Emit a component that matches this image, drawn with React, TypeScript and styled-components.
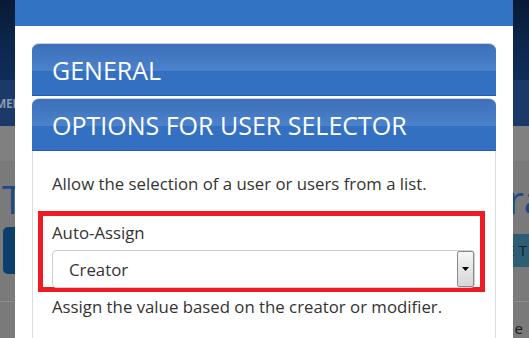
import React from "react";
import styled, { createGlobalStyle } from "styled-components";

const GlobalStyle = createGlobalStyle`
	html, body {
		margin: 0;
		padding: 0;
		width: 529px;
		height: 338px;
		overflow: hidden;
	}
	body {
		font-family: "Open Sans", "Liberation Sans", sans-serif;
	}
`;

const Page = styled.div`
	position: relative;
	width: 529px;
	height: 338px;
	overflow: hidden;
	background: #7f7f7f;
	display: flex;
	flex-direction: column;
`;

const TopBar = styled.div`
	height: 83px;
	background: linear-gradient(to bottom, #081a36 0%, #0d2850 60%, #0f2d5a 100%);
`;

const NavBand = styled.div`
	height: 47px;
	background: #1c3a69;
	display: flex;
	align-items: center;
	justify-content: space-between;
	.nav-item {
		font-family: "Open Sans", sans-serif;
		font-size: 12px;
		font-weight: 700;
		color: #8a99b0;
		margin-left: -5px;
		letter-spacing: -0.3px;
	}
`;

const Content = styled.div`
	flex: 1;
	display: flex;
	flex-direction: column;
	.strip {
		height: 35px;
		background: #808080;
	}
	.rest {
		flex: 1;
		background: #7a7a7a;
		display: flex;
		flex-direction: column;
	}
`;

const BgTitle = styled.div`
	display: flex;
	justify-content: space-between;
	font-family: "Open Sans", sans-serif;
	font-size: 38px;
	line-height: 40px;
	color: #1c4a86;
	padding: 0 0 0 2px;
	margin-top: 18px;
	.right {
		margin-right: -16px;
	}
`;

const BgButtons = styled.div`
	display: flex;
	justify-content: space-between;
	align-items: center;
	margin-top: 8px;
	height: 47px;
	.left {
		margin-left: 3px;
		width: 40px;
		height: 47px;
		border-radius: 5px;
		background: #0e3e6c;
	}
	.right {
		height: 33px;
		width: 40px;
		background: #2d5e73;
		font-family: "Open Sans", sans-serif;
		font-size: 15px;
		line-height: 33px;
		color: #10222c;
		box-sizing: border-box;
		text-align: right;
		padding-right: 2px;
	}
`;

const BgLine = styled.div`
	margin-top: 27px;
	height: 1px;
	background: #8d8d8d;
`;

const BgTail = styled.div`
	text-align: right;
	font-family: "Open Sans", sans-serif;
	font-size: 15px;
	line-height: 20px;
	color: #1a1a1a;
	margin-top: 16px;
	padding-right: 6px;
`;

const Modal = styled.div`
	position: absolute;
	left: 15px;
	top: 0;
	width: 498px;
	height: 338px;
	background: #fff;
	display: flex;
	flex-direction: column;
`;

const ModalHeader = styled.div`
	height: 26px;
	background: #3373c4;
	flex-shrink: 0;
`;

const ModalBody = styled.div`
	flex: 1;
	padding: 17px 17px 0 17px;
	display: flex;
	flex-direction: column;
	gap: 2px;
`;

const Panel = styled.div<{ $open?: boolean }>`
	display: flex;
	flex-direction: column;
	flex: ${(p) => (p.$open ? 1 : "none")};
`;

const PanelHeading = styled.div`
	height: 53px;
	box-sizing: border-box;
	border-radius: 7px 7px 0 0;
	border-top: 1px solid #c9d6e8;
	border-bottom: 1px solid #2a5ea6;
	background: linear-gradient(
		to bottom,
		#3d70b9 0%,
		#4a82cb 52%,
		#3370c2 52%,
		#3370c2 100%
	);
	display: flex;
	align-items: center;
	padding-left: 20px;
	padding-top: 1px;
	font-family: "Open Sans", sans-serif;
	font-size: 25px;
	color: #fff;
`;

const PanelContent = styled.div`
	flex: 1;
	border-left: 1px solid #dcdcdc;
	border-right: 1px solid #dcdcdc;
	padding: 21px 6px 0 5px;
	display: flex;
	flex-direction: column;
	color: #333;
	font-size: 16.8px;
	font-family: "Open Sans", sans-serif;
`;

const Help = styled.div<{ $gap?: number }>`
	padding-left: 14px;
	line-height: 23px;
	margin-top: ${(p) => p.$gap || 0}px;
	white-space: nowrap;
`;

const Highlight = styled.div`
	margin-top: 16px;
	border: 5px solid #ed1c24;
	padding: 5px 5px 0 9px;
	display: flex;
	flex-direction: column;
	width: 447px;
	box-sizing: border-box;
`;

const Label = styled.div`
	line-height: 23px;
	margin-bottom: 6px;
`;

const Select = styled.div`
	height: 38px;
	margin-bottom: -1px;
	box-sizing: border-box;
	border: 1px solid #cfcfcf;
	border-radius: 4px;
	display: flex;
	align-items: stretch;
	.value {
		flex: 1;
		display: flex;
		align-items: center;
		padding-left: 16px;
		color: #333;
	}
`;

const DropButton = styled.div`
	width: 17px;
	box-sizing: border-box;
	border: 1px solid #8a8a8a;
	border-radius: 2px;
	background: linear-gradient(to bottom, #f6f6f6 0%, #e6e6e6 50%, #d6d6d6 100%);
	display: flex;
	align-items: center;
	justify-content: center;
`;

export default function App() {
	return (
		<>
			<GlobalStyle />
			<Page>
				<TopBar />
				<NavBand>
					<span className="nav-item">MENU</span>
				</NavBand>
				<Content>
					<div className="strip" />
					<div className="rest">
						<BgTitle>
							<span>T</span>
							<span className="right">ra</span>
						</BgTitle>
						<BgButtons>
							<div className="left" />
							<div className="right">E T</div>
						</BgButtons>
						<BgLine />
						<BgTail>e</BgTail>
					</div>
				</Content>
				<Modal>
					<ModalHeader />
					<ModalBody>
						<Panel>
							<PanelHeading>GENERAL</PanelHeading>
						</Panel>
						<Panel $open>
							<PanelHeading>OPTIONS FOR USER SELECTOR</PanelHeading>
							<PanelContent>
								<Help>Allow the selection of a user or users from a list.</Help>
								<Highlight>
									<Label>Auto-Assign</Label>
									<Select>
										<div className="value">Creator</div>
										<DropButton>
											<svg width="7" height="4" viewBox="0 0 7 4">
												<path d="M0 0 L7 0 L3.5 4 Z" fill="#000" />
											</svg>
										</DropButton>
									</Select>
								</Highlight>
								<Help $gap={3}>Assign the value based on the creator or modifier.</Help>
							</PanelContent>
						</Panel>
					</ModalBody>
				</Modal>
			</Page>
		</>
	);
}
